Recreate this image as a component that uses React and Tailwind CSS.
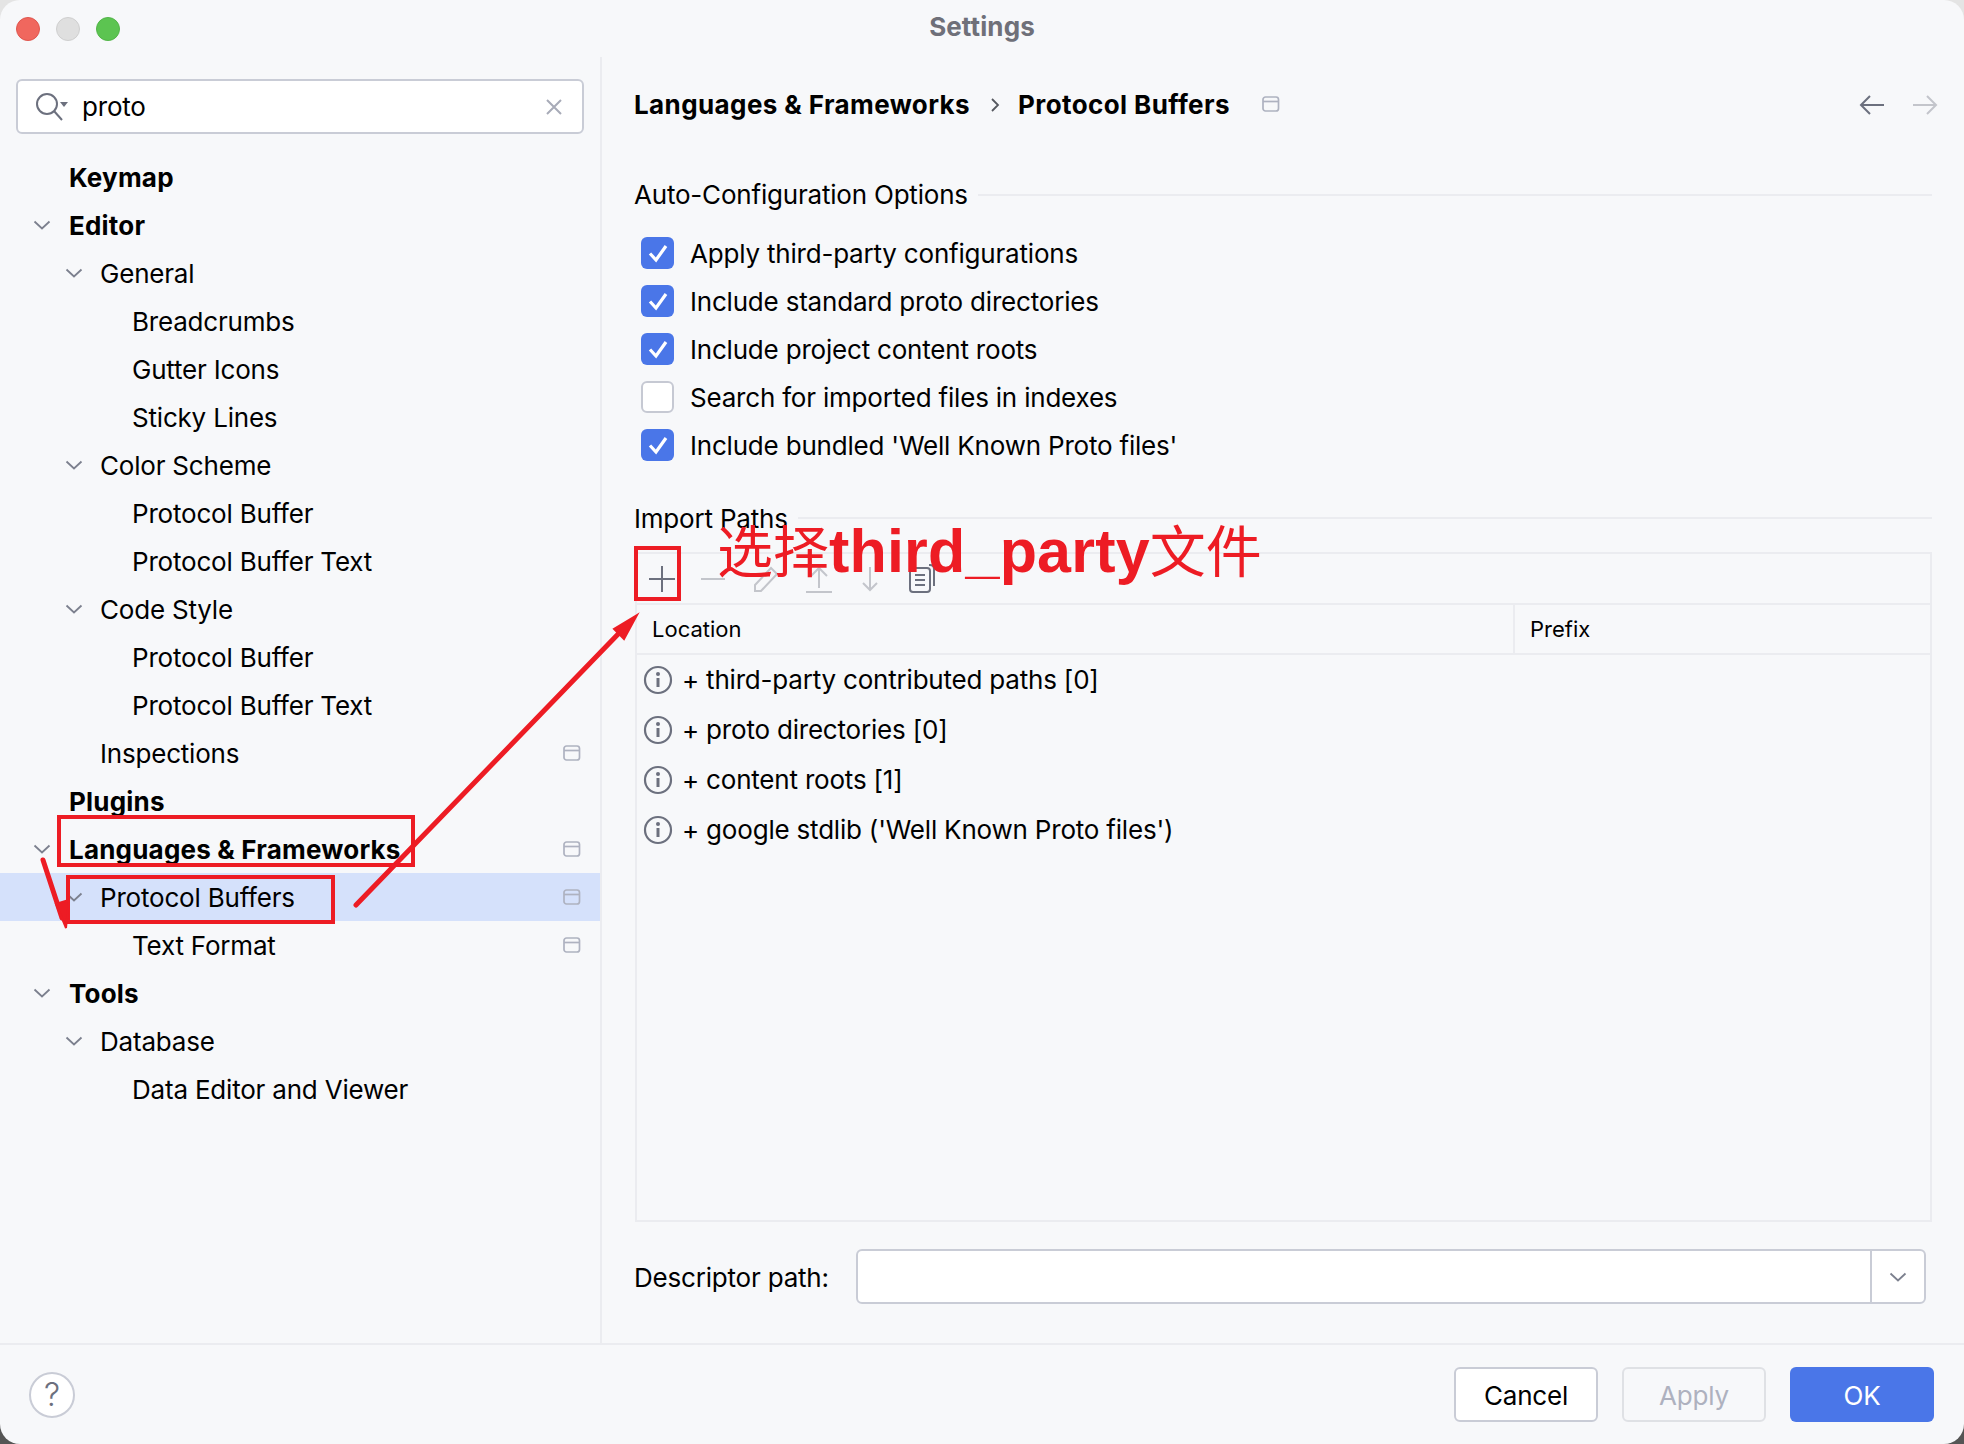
const FONT = { fontFamily: 'Inter, "Noto Sans CJK SC", sans-serif' };

const TREE = [
  { label: 'Keymap', level: 0, bold: true },
  { label: 'Editor', level: 0, bold: true, open: true },
  { label: 'General', level: 1, open: true },
  { label: 'Breadcrumbs', level: 2 },
  { label: 'Gutter Icons', level: 2 },
  { label: 'Sticky Lines', level: 2 },
  { label: 'Color Scheme', level: 1, open: true },
  { label: 'Protocol Buffer', level: 2 },
  { label: 'Protocol Buffer Text', level: 2 },
  { label: 'Code Style', level: 1, open: true },
  { label: 'Protocol Buffer', level: 2 },
  { label: 'Protocol Buffer Text', level: 2 },
  { label: 'Inspections', level: 1, pin: true },
  { label: 'Plugins', level: 0, bold: true },
  { label: 'Languages & Frameworks', level: 0, bold: true, open: true, pin: true },
  { label: 'Protocol Buffers', level: 1, open: true, pin: true, selected: true },
  { label: 'Text Format', level: 2, pin: true },
  { label: 'Tools', level: 0, bold: true, open: true },
  { label: 'Database', level: 1, open: true },
  { label: 'Data Editor and Viewer', level: 2 },
];

const OPTIONS = [
  { label: 'Apply third-party configurations', on: true },
  { label: 'Include standard proto directories', on: true },
  { label: 'Include project content roots', on: true },
  { label: 'Search for imported files in indexes', on: false },
  { label: "Include bundled 'Well Known Proto files'", on: true },
];

const PATHS = [
  '+ third-party contributed paths [0]',
  '+ proto directories [0]',
  '+ content roots [1]',
  "+ google stdlib ('Well Known Proto files')",
];

function Chevron({ className = '' }) {
  return (
    <svg width="18" height="10" viewBox="0 0 18 10" fill="none" className={className}>
      <path d="M1.5 1.5 9 8.5l7.5-7" stroke="#7c808e" strokeWidth="1.8" />
    </svg>
  );
}

function PinIcon() {
  return (
    <svg width="18" height="16" viewBox="0 0 18 16" fill="none">
      <rect x="1" y="1" width="15.5" height="14" rx="2.5" stroke="#aeb2c0" strokeWidth="1.7" />
      <path d="M1 5.5h15.5" stroke="#aeb2c0" strokeWidth="1.7" />
    </svg>
  );
}

function InfoIcon() {
  return (
    <svg width="30" height="30" viewBox="0 0 30 30" fill="none">
      <circle cx="15" cy="15" r="13" stroke="#6c707e" strokeWidth="2.2" />
      <circle cx="15" cy="9" r="2" fill="#6c707e" />
      <path d="M15 13v9" stroke="#6c707e" strokeWidth="3" />
    </svg>
  );
}

function TreeRow({ row }) {
  const textLeft = row.bold ? 'pl-[69px]' : row.level === 1 ? 'pl-[100px]' : 'pl-[132px]';
  const chevLeft = row.level === 0 ? 'left-[33px]' : 'left-[65px]';
  return (
    <div className={`relative flex h-12 items-center pr-[19px] ${textLeft} ${row.selected ? 'bg-[#d5e1fb]' : ''}`}>
      {row.open && <Chevron className={`absolute top-[19px] ${chevLeft}`} />}
      <span className={`pt-[1px] text-[26px] leading-none text-black ${row.bold ? 'font-bold tracking-[0.2px]' : ''}`}>{row.label}</span>
      {row.pin && <div className="ml-auto flex"><PinIcon /></div>}
    </div>
  );
}

function CheckRow({ label, on }) {
  return (
    <div className="flex h-12 items-center pl-[7px]">
      {on ? (
        <div className="flex h-[32px] w-[33px] items-center justify-center rounded-[6px] bg-[#4a76e8]">
          <svg width="22" height="20" viewBox="0 0 22 20" fill="none">
            <path d="M3 10.5 9 17 19 3" stroke="#fff" strokeWidth="3.2" />
          </svg>
        </div>
      ) : (
        <div className="h-[32px] w-[33px] rounded-[6px] border-2 border-[#c6c9d3] bg-white" />
      )}
      <span className="ml-[16px] pt-[1px] text-[26px] leading-none text-black">{label}</span>
    </div>
  );
}

function Toolbar() {
  const off = '#c3c5cb';
  return (
    <div className="flex h-[51px] items-center border-b-2 border-[#ebecf0] pl-[10px]">
      <svg width="30" height="30" viewBox="0 0 30 30" fill="none">
        <path d="M15 2v26M2 15h26" stroke="#6c707e" strokeWidth="2" />
      </svg>
      <svg width="26" height="30" viewBox="0 0 26 30" fill="none" className="ml-[23px]">
        <path d="M1 15h24" stroke={off} strokeWidth="2" />
      </svg>
      <svg width="28" height="30" viewBox="0 0 28 30" fill="none" className="ml-[26px]">
        <path d="M3 27v-6L19 4l6 6L9 27H3Z" stroke={off} strokeWidth="2" />
      </svg>
      <svg width="28" height="30" viewBox="0 0 28 30" fill="none" className="ml-[25px]">
        <path d="M14 24V5M6 12l8-8 8 8M1 28h26" stroke={off} strokeWidth="2" />
      </svg>
      <svg width="20" height="30" viewBox="0 0 20 30" fill="none" className="ml-[27px]">
        <path d="M10 3v23M3 19l7 7 7-7" stroke={off} strokeWidth="2" />
      </svg>
      <svg width="26" height="30" viewBox="0 0 26 30" fill="none" className="ml-[29px]">
        <path d="M20 1h1a4 4 0 0 1 4 4v17" stroke="#6c707e" strokeWidth="2" />
        <rect x="1" y="4" width="20" height="24" rx="3" stroke="#6c707e" strokeWidth="2" />
        <path d="M6 11h10M6 16h10M6 21h10" stroke="#6c707e" strokeWidth="2" />
      </svg>
    </div>
  );
}

function Annotations() {
  return (
    <>
      <div className="absolute left-[57px] top-[815px] h-[52px] w-[358px] border-[4px] border-[#ed1c24]" />
      <div className="absolute left-[66px] top-[875px] h-[49px] w-[269px] border-[4px] border-[#ed1c24]" />
      <div className="absolute left-[634px] top-[546px] h-[55px] w-[47px] border-[4px] border-[#ed1c24]" />
      <div className="absolute left-[717px] top-[512px] whitespace-nowrap text-[56px] leading-[72px] tracking-normal text-[#ed1c24]" style={{ fontFamily: '"Noto Sans CJK SC", sans-serif' }}>
        选择<span className="text-[61px] font-bold tracking-[0.2px]" style={{ fontFamily: '"Liberation Sans", sans-serif' }}>third_party</span>文件
      </div>
      <svg width="1964" height="1444" viewBox="0 0 1964 1444" fill="none" className="pointer-events-none absolute left-0 top-0">
        <path d="M356 905 624 628" stroke="#ed1c24" strokeWidth="5" strokeLinecap="round" />
        <path d="M637 615 614 629 624 639Z" fill="#ed1c24" stroke="#ed1c24" strokeWidth="2" />
        <path d="M43 860 62 918" stroke="#ed1c24" strokeWidth="5" strokeLinecap="round" />
        <path d="M66 928 56 904 69 900Z" fill="#ed1c24" stroke="#ed1c24" strokeWidth="2" />
      </svg>
    </>
  );
}

export default function App() {
  return (
    <div className="relative h-[1444px] w-[1964px] overflow-hidden bg-[linear-gradient(#e4e4e4_90%,#555_90%)] tracking-[-0.2px]" style={FONT}>
      <div className="flex h-full flex-col rounded-[20px] bg-[#f7f8fa]">
        {/* title bar */}
        <div className="grid h-[57px] shrink-0 grid-cols-[1fr_auto_1fr] items-center">
          <div className="flex gap-[16px] pl-[16px]">
            <div className="h-[24px] w-[24px] rounded-full border border-[#e0564e] bg-[#f0675e]" />
            <div className="h-[24px] w-[24px] rounded-full border border-[#cfcfcf] bg-[#dfdfdf]" />
            <div className="h-[24px] w-[24px] rounded-full border border-[#52b548] bg-[#5cc451]" />
          </div>
          <div className="pb-[4px] text-[26px] font-bold leading-none tracking-[0.1px] text-[#6f7079]">Settings</div>
          <div />
        </div>

        <div className="flex min-h-0 flex-1">
          {/* sidebar */}
          <div className="w-[602px] shrink-0 border-r-2 border-[#ebecf0]">
            <div className="mx-[16px] mt-[22px] flex h-[55px] items-center rounded-[6px] border-2 border-[#c9ccd6] bg-white pl-[17px] pr-[20px]">
              <svg width="34" height="30" viewBox="0 0 34 30" fill="none">
                <circle cx="12" cy="12" r="10" stroke="#6c707e" strokeWidth="2" />
                <path d="m19 19 8 9" stroke="#6c707e" strokeWidth="2" />
                <path d="M25 10h8l-4 5Z" fill="#6c707e" />
              </svg>
              <span className="ml-[13px] pt-[1px] text-[26px] leading-none text-black">proto</span>
              <svg width="16" height="16" viewBox="0 0 16 16" fill="none" className="ml-auto">
                <path d="m1 1 14 14M15 1 1 15" stroke="#a8abb8" strokeWidth="2" />
              </svg>
            </div>
            <div className="mt-[19px]">
              {TREE.map((row, i) => <TreeRow key={i} row={row} />)}
            </div>
          </div>

          {/* settings panel */}
          <div className="flex min-w-0 flex-1 flex-col pl-[32px] pr-[32px]">
            <div className="mt-[24px] flex h-12 items-center">
              <span className="text-[26px] font-bold leading-none tracking-[0.4px] text-black">Languages &amp; Frameworks</span>
              <svg width="10" height="16" viewBox="0 0 10 16" fill="none" className="ml-[20px]">
                <path d="m2 2 6 6-6 6" stroke="#55585f" strokeWidth="1.8" />
              </svg>
              <span className="ml-[18px] text-[26px] font-bold leading-none tracking-[0.4px] text-black">Protocol Buffers</span>
              <div className="ml-[32px] flex pb-[2px]"><PinIcon /></div>
              <svg width="26" height="22" viewBox="0 0 26 22" fill="none" className="ml-auto">
                <path d="M25 11H2M11 2l-9 9 9 9" stroke="#6c707e" strokeWidth="2" />
              </svg>
              <svg width="26" height="22" viewBox="0 0 26 22" fill="none" className="-mr-[6px] ml-[27px]">
                <path d="M1 11h23M15 2l9 9-9 9" stroke="#c3c5cb" strokeWidth="2" />
              </svg>
            </div>

            <div className="mt-[50px] flex h-8 items-center">
              <span className="text-[26px] leading-none text-black">Auto-Configuration Options</span>
              <div className="ml-[10px] h-[2px] flex-1 bg-[#ebecf0]" />
            </div>
            <div className="mt-[18px]">
              {OPTIONS.map((o) => <CheckRow key={o.label} label={o.label} on={o.on} />)}
            </div>

            <div className="mt-[33px] flex h-8 items-center">
              <span className="pt-[1px] text-[26px] leading-none text-black">Import Paths</span>
              <div className="ml-[10px] h-[2px] flex-1 bg-[#ebecf0]" />
            </div>

            <div className="ml-[1px] mt-[18px] flex h-[670px] flex-col border-2 border-[#ebecf0]">
              <Toolbar />
              <div className="flex h-[50px] shrink-0 border-b-2 border-[#ebecf0] text-[22px] tracking-normal text-black">
                <div className="flex w-[878px] items-center border-r-2 border-[#ebecf0] pl-[15px]">Location</div>
                <div className="flex items-center pl-[15px]">Prefix</div>
              </div>
              {PATHS.map((p) => (
                <div key={p} className="flex h-[50px] shrink-0 items-center pl-[6px]">
                  <InfoIcon />
                  <span className="ml-[9px] text-[26px] leading-none text-black">{p}</span>
                </div>
              ))}
            </div>

            <div className="mt-[27px] flex h-[55px] items-center">
              <span className="pt-[2px] text-[26px] leading-none text-black">Descriptor path:</span>
              <div className="ml-[27px] mr-[6px] flex h-full flex-1 rounded-[6px] border-2 border-[#c9ccd6] bg-white">
                <div className="flex-1 border-r-2 border-[#c9ccd6]" />
                <div className="flex w-[52px] items-center justify-center">
                  <Chevron />
                </div>
              </div>
            </div>
          </div>
        </div>

        {/* footer */}
        <div className="flex h-[101px] shrink-0 items-center border-t-2 border-[#ebecf0] pl-[29px] pr-[30px]">
          <div className="flex h-[46px] w-[46px] items-center justify-center rounded-full border-2 border-[#c9ccd6] bg-white text-[32px] font-light leading-none text-[#6c707e]">?</div>
          <button className="ml-auto h-[55px] w-[144px] rounded-[6px] border-2 border-[#c9ccd6] bg-white pt-[1px] text-[26px] text-black">Cancel</button>
          <button className="ml-[24px] h-[55px] w-[144px] rounded-[6px] border-2 border-[#dfe1e5] pt-[1px] text-[26px] text-[#aeb1bf]">Apply</button>
          <button className="ml-[24px] h-[55px] w-[144px] rounded-[6px] bg-[#4a76e8] pt-[1px] text-[26px] text-white">OK</button>
        </div>
      </div>
      <Annotations />
    </div>
  );
}
